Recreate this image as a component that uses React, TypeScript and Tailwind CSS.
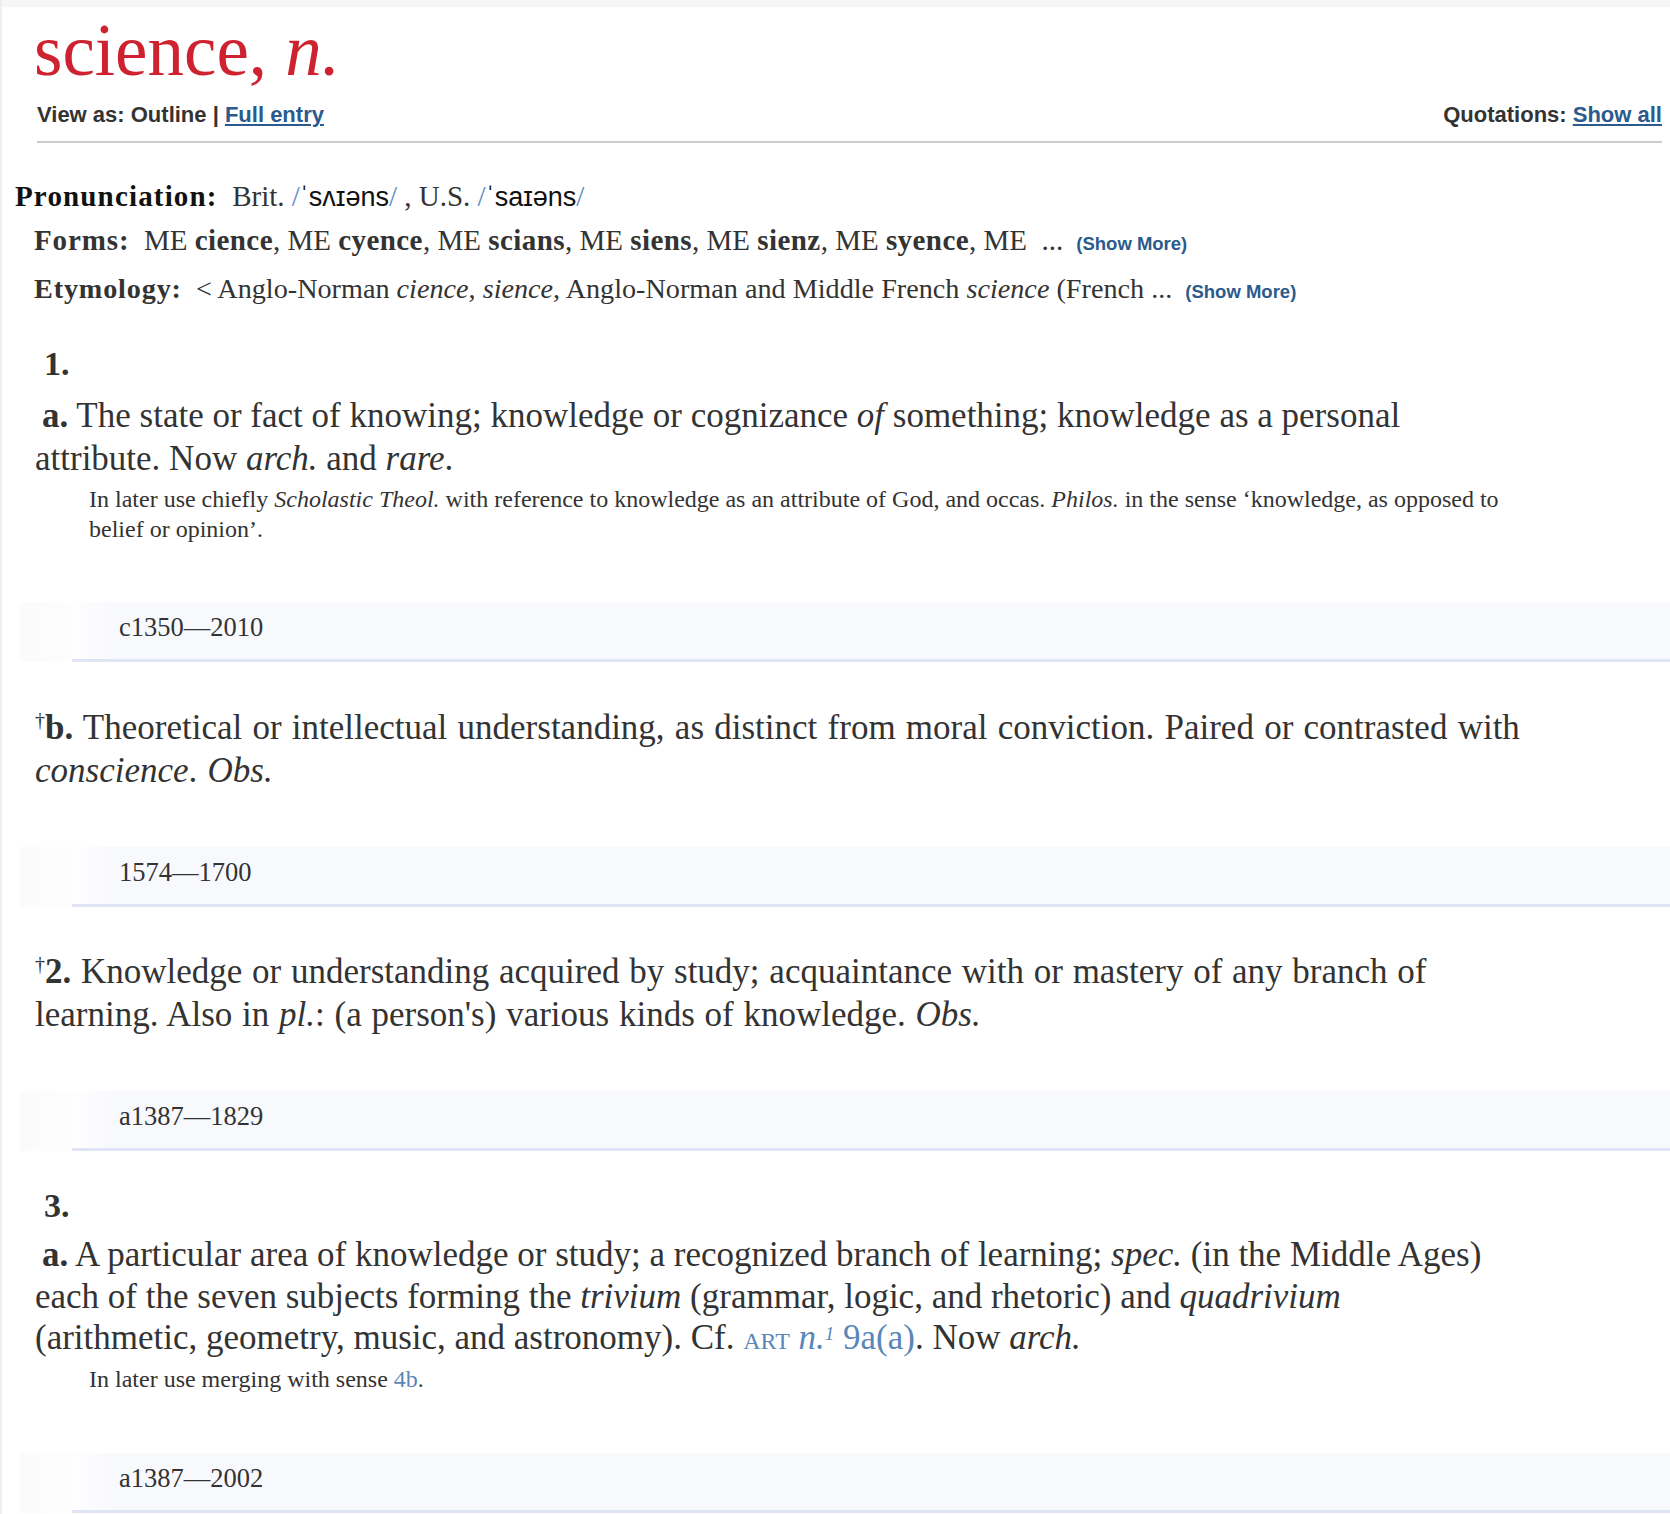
import React from "react";

const serif = "font-['Liberation_Serif','Times_New_Roman',serif]";
const sans = "font-['Liberation_Sans',Arial,sans-serif]";

const QuoteBar = ({ range }: { range: string }) => (
  <div className="ml-[18px] bg-[linear-gradient(to_right,#fbfbfc,#fdfdfe_50px)]">
    <div className="ml-[52px] flex h-[60px] items-center border-b-[3px] border-[#dfe5f5] bg-[linear-gradient(to_right,#fefeff,#f8f9fd_45px)] pl-[47px]">
      <span className="pb-[5px] text-[26.5px] text-[#333]">{range}</span>
    </div>
  </div>
);

const ShowMore = () => (
  <span className={`${sans} ml-[13px] text-[18.5px] font-bold text-[#2b5a8c]`}>(Show More)</span>
);

const Slash = () => <span className="text-[#5b8bc4]">/</span>;

const App = () => {
  return (
    <div className={`${serif} min-h-[1514px] border-l-2 border-[#efefef] bg-white text-[#333]`}>
      <div className="h-[7px] bg-[#f6f6f6]" />

      {/* header */}
      <header className="pl-[32px] pr-[8px]">
        <h1 className="mt-[8px] text-[73px] leading-[72px] text-[#cf2230]">
          science, <i>n.</i>
        </h1>
        <div className={`${sans} mt-[16px] flex justify-between pl-[3px] text-[22px] font-bold leading-[24px] text-[#333]`}>
          <div>
            View as: Outline | <a className="text-[#2b5a8c] underline">Full entry</a>
          </div>
          <div>
            Quotations: <a className="text-[#2b5a8c] underline">Show all</a>
          </div>
        </div>
        <div className="ml-[3px] mt-[14px] h-[2px] bg-[#cccccc]" />
      </header>

      {/* entry heading info */}
      <div className="mt-[35px] pl-[13px] text-[29px] leading-[36px]">
        <b className="tracking-[0.04em] text-[#111]">Pronunciation:</b>&nbsp; Brit. <Slash />
        <span className={`${sans} text-[27px] text-[#111]`}>ˈsʌɪəns</span>
        <Slash /> , U.S. <Slash />
        <span className={`${sans} text-[27px] text-[#111]`}>ˈsaɪəns</span>
        <Slash />
      </div>
      <div className="mt-[7px] pl-[32px] text-[29px] leading-[36px]">
        <b className="tracking-[0.03em]">Forms:</b>&nbsp; ME <b className="tracking-[0.015em]">cience</b>, ME{" "}
        <b className="tracking-[0.015em]">cyence</b>, ME <b className="tracking-[0.015em]">scians</b>, ME{" "}
        <b className="tracking-[0.015em]">siens</b>, ME <b className="tracking-[0.015em]">sienz</b>, ME{" "}
        <b className="tracking-[0.015em]">syence</b>, ME&nbsp; ...
        <ShowMore />
      </div>
      <div className="mt-[9px] pl-[32px] text-[28.2px] leading-[36px]">
        <b className="tracking-[0.03em]">Etymology:</b>&nbsp; &lt; Anglo-Norman <i>cience</i>, <i>sience</i>, Anglo-Norman
        and Middle French <i>science</i> (French ...
        <ShowMore />
      </div>

      {/* sense 1 */}
      <div className="mt-[32px] pl-[42px] text-[34px] font-bold leading-[43px]">1.</div>
      <p className="mt-[9px] whitespace-nowrap pl-[33px] text-[35px] leading-[43px]">
        <b className="ml-[7px]">a.</b> The state or fact of knowing; knowledge or cognizance <i>of</i> something; knowledge
        as a personal
        <br />
        attribute. Now <i>arch.</i> and <i>rare</i>.
      </p>
      <p className="mt-[4px] whitespace-nowrap pl-[87px] text-[24px] leading-[30px]">
        In later use chiefly <i>Scholastic Theol.</i> with reference to knowledge as an attribute of God, and occas.{" "}
        <i>Philos.</i> in the sense ‘knowledge, as opposed to
        <br />
        belief or opinion’.
      </p>
      <div className="mt-[58px]">
        <QuoteBar range="c1350—2010" />
      </div>

      <p className="mt-[44px] whitespace-nowrap pl-[33px] text-[35px] leading-[43px] [word-spacing:1.5px]">
        <sup className="top-[-0.6em] text-[20px]">†</sup>
        <b>b.</b> Theoretical or intellectual understanding, as distinct from moral conviction. Paired or contrasted with
        <br />
        <i>conscience</i>. <i>Obs.</i>
      </p>
      <div className="mt-[55px]">
        <QuoteBar range="1574—1700" />
      </div>

      {/* sense 2 */}
      <p className="mt-[43px] whitespace-nowrap pl-[33px] text-[35px] leading-[43px] [word-spacing:1px]">
        <sup className="top-[-0.6em] text-[20px]">†</sup>
        <b>2.</b> Knowledge or understanding acquired by study; acquaintance with or mastery of any branch of
        <br />
        learning. Also in <i>pl.</i>: (a person's) various kinds of knowledge. <i>Obs.</i>
      </p>
      <div className="mt-[55px]">
        <QuoteBar range="a1387—1829" />
      </div>

      {/* sense 3 */}
      <div className="mt-[33px] pl-[42px] text-[34px] font-bold leading-[43px]">3.</div>
      <p className="mt-[7px] whitespace-nowrap pl-[33px] text-[35px] leading-[41.5px]">
        <b className="ml-[7px]">a.</b> A particular area of knowledge or study; a recognized branch of learning;{" "}
        <i>spec.</i> (in the Middle Ages)
        <br />
        each of the seven subjects forming the <i>trivium</i> (grammar, logic, and rhetoric) and <i>quadrivium</i>
        <br />
        (arithmetic, geometry, music, and astronomy). Cf.{" "}
        <span className="text-[#5b87b8]">
          <span className="text-[24px]">ART</span> <i>n.</i>
          <sup className="text-[19px] italic">1</sup> 9a(a)
        </span>
        . Now <i>arch.</i>
      </p>
      <p className="mt-[1px] pl-[87px] text-[24px] leading-[30px]">
        In later use merging with sense <span className="text-[#5b87b8]">4b</span>.
      </p>
      <div className="mt-[59px]">
        <QuoteBar range="a1387—2002" />
      </div>
    </div>
  );
};

export default App;
